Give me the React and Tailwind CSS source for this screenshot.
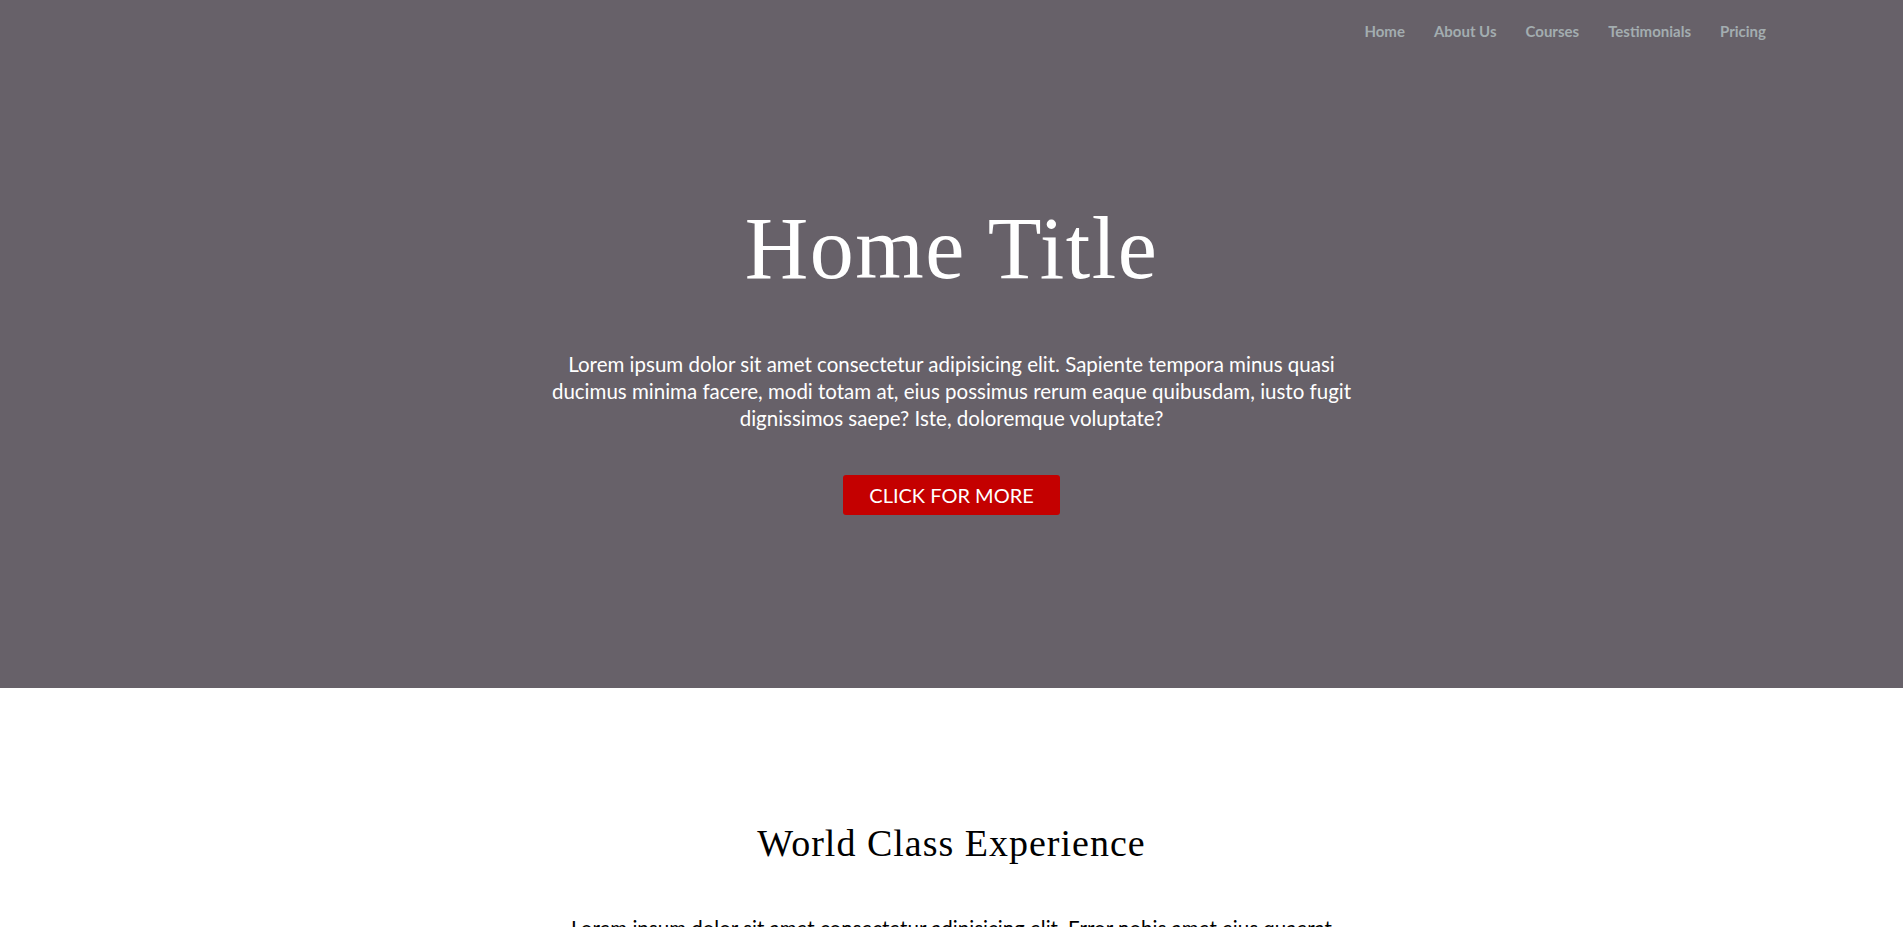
const navLinks = ['Home', 'About Us', 'Courses', 'Testimonials', 'Pricing'];

const App = () => {
  return (
    <div className="min-h-screen bg-white font-['Lato','Noto_Sans',sans-serif]">
      {/* Hero */}
      <section className="h-[688px] bg-[#676169] flex flex-col">
        <nav className="h-[62px] flex items-center justify-end gap-[29px] pr-[137px]">
          {navLinks.map((link) => (
            <a
              key={link}
              href="#"
              className="text-[15px] font-bold text-[#a3adb0] hover:text-white transition-colors"
            >
              {link}
            </a>
          ))}
        </nav>

        <div className="flex flex-col items-center text-center">
          <h1 className="mt-[143px] font-['Liberation_Serif',serif] text-[88px] leading-none tracking-[1.5px] text-white">
            Home Title
          </h1>
          <p className="mt-[58px] w-[810px] text-[20.5px] leading-[27px] text-white">
            Lorem ipsum dolor sit amet consectetur adipisicing elit. Sapiente tempora minus quasi
            ducimus minima facere, modi totam at, eius possimus rerum eaque quibusdam, iusto fugit
            dignissimos saepe? Iste, doloremque voluptate?
          </p>
          <button className="mt-[43px] h-[40px] px-[26px] rounded-[3px] bg-[#c40000] text-[20px] text-white">
            CLICK FOR MORE
          </button>
        </div>
      </section>

      {/* Experience */}
      <section className="flex flex-col items-center text-center pt-[136px] pb-24">
        <h2 className="font-['Liberation_Serif',serif] text-[38px] leading-none tracking-[1px] text-black">
          World Class Experience
        </h2>
        <p className="mt-[53px] w-[810px] text-[20.5px] leading-[27px] text-black">
          Lorem ipsum dolor sit amet consectetur adipisicing elit. Error nobis amet eius quaerat
          voluptatibus, dolores nesciunt iure praesentium distinctio reiciendis, ducimus maiores
          quisquam sunt ipsam perspiciatis? Molestias, quia doloremque.
        </p>
      </section>
    </div>
  );
};

export default App;
